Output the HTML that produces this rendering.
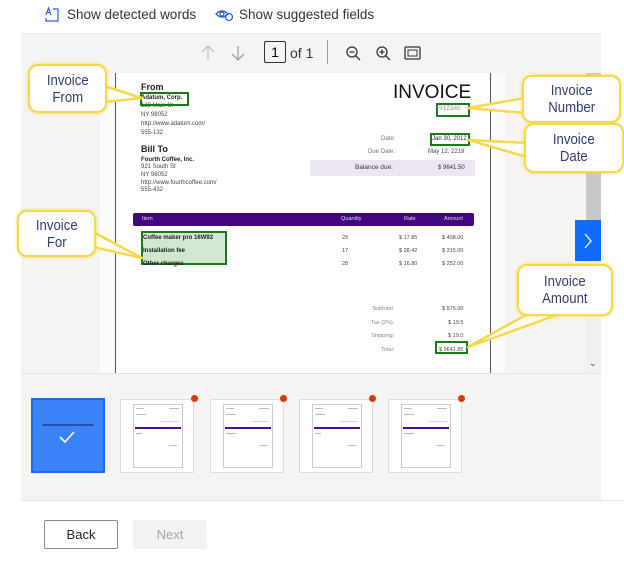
<!DOCTYPE html>
<html><head><meta charset="utf-8"><style>
*{margin:0;padding:0;box-sizing:border-box}
body{width:624px;height:561px;overflow:hidden;background:#fff;font-family:"Liberation Sans",sans-serif;position:relative}
.a{position:absolute}
.t{position:absolute;white-space:nowrap;color:#222}
.co{position:absolute;background:#fff;border:2.5px solid #f5d94a;border-radius:10px;box-shadow:0 0 3px #f0d24a;color:#2e3d6b;font-size:15px;line-height:17px;text-align:center;display:flex;align-items:center;justify-content:center}
.co span{display:inline-block;transform:scaleX(0.88)}
.gb{position:absolute;border:2px solid #1a7a1a}
.th{position:absolute;top:399px;width:74px;height:74px;background:#fff;border:1px solid #ddd}
.th .in{position:absolute;left:12px;top:4px;width:50px;height:64px;border:1px solid #ccc}
.th .bar{position:absolute;left:14px;top:27px;width:46px;height:2px;background:#4b0f88}
.th .l{position:absolute;height:1px;background:#bbb}
.dot{position:absolute;top:395px;width:7px;height:7px;border-radius:50%;background:#d83b01}
</style></head><body>
<!-- toolbar -->
<svg class="a" style="left:44px;top:6px" width="18" height="18" viewBox="0 0 18 18" fill="none" stroke="#2b5fd9" stroke-width="1.2"><path d="M2 9 L4.5 2 L7 9 M3 6.5 H6"/><path d="M9 3 H14 V15 H2 V12"/></svg>
<div class="t" style="left:67px;top:7px;font-size:13.5px;color:#333">Show detected words</div>
<svg class="a" style="left:215px;top:8px" width="20" height="14" viewBox="0 0 20 14" fill="none" stroke="#2b5fd9" stroke-width="1.3"><path d="M1 6 Q7 0 13 6 Q7 12 1 6Z"/><circle cx="7" cy="6" r="2"/><circle cx="14" cy="9" r="3.5"/></svg>
<div class="t" style="left:239px;top:7px;font-size:13.5px;color:#333">Show suggested fields</div>
<!-- viewer -->
<div class="a" style="left:21px;top:33px;width:580px;height:467px;background:#f5f4f2"></div>
<div class="a" style="left:21px;top:33px;width:580px;height:1px;background:#eae8e6"></div>
<div class="a" style="left:100px;top:73px;width:405px;height:300px;background:#fbfbfa"></div>
<div class="a" style="left:115px;top:73px;width:376px;height:300px;background:#fff;border-left:1.5px solid #555;border-right:1.5px solid #555"></div>
<div class="a" style="left:21px;top:373px;width:580px;height:1px;background:#e8e6e4"></div>
<!-- nav -->
<svg class="a" style="left:200px;top:44px" width="46" height="18" viewBox="0 0 46 18" fill="none" stroke-width="1.3"><path d="M8 16V2M2 8L8 2L14 8" stroke="#c0c0c0"/><path d="M38 2V16M32 10L38 16L44 10" stroke="#a0a0a0"/></svg>
<div class="a" style="left:264px;top:41px;width:22px;height:22px;border:1.3px solid #333;border-radius:2px;font-size:14px;text-align:center;line-height:20px">1</div>
<div class="t" style="left:290px;top:45px;font-size:14px;color:#333">of 1</div>
<div class="a" style="left:327px;top:40px;width:1px;height:24px;background:#999"></div>
<svg class="a" style="left:345px;top:45px" width="80" height="18" viewBox="0 0 80 18" fill="none" stroke="#333" stroke-width="1.3"><circle cx="7" cy="7" r="5"/><path d="M4.5 7H9.5M10.5 10.5L15 15"/><circle cx="37" cy="7" r="5"/><path d="M34.5 7H39.5M37 4.5V9.5M40.5 10.5L45 15"/><rect x="60" y="2" width="15" height="12" rx="1"/><path d="M63 5H72V11H63Z" stroke-width="1"/></svg>
<!-- doc -->
<div class="t" style="left:141px;top:82px;font-size:9px;font-weight:bold">From</div>
<div class="t" style="left:141px;top:94px;font-size:6px;font-weight:bold;line-height:9px">Adatum, Corp.</div>
<div class="t" style="left:141px;top:102px;font-size:6px;line-height:9px;color:#444">123 Main St<br>NY 98052<br>http://www.adatum.com/<br>555-132</div>
<div class="gb" style="left:140px;top:92px;width:49px;height:14px"></div>
<div class="t" style="left:393px;top:82px;font-size:19px;color:#111">INVOICE</div>
<div class="t" style="left:439px;top:105px;font-size:6.5px;color:#999">912346</div>
<div class="gb" style="left:436px;top:103px;width:34px;height:14px"></div>
<div class="t" style="left:381px;top:136px;font-size:6px;color:#777">Date:</div>
<div class="t" style="left:432px;top:136px;font-size:6px">Jan 30, 2012</div>
<div class="gb" style="left:430px;top:133px;width:40px;height:13px"></div>
<div class="t" style="left:368px;top:149px;font-size:6px;color:#777">Due Date:</div>
<div class="t" style="left:428px;top:149px;font-size:6px;color:#444">May 12, 2219</div>
<div class="a" style="left:310px;top:160px;width:165px;height:16px;background:#ece6f2"></div>
<div class="t" style="left:355px;top:164px;font-size:6.5px;color:#333">Balance due:</div>
<div class="t" style="left:438px;top:165px;font-size:6px;color:#333">$ 9641.50</div>
<div class="t" style="left:141px;top:144px;font-size:9px;font-weight:bold">Bill To</div>
<div class="t" style="left:141px;top:157px;font-size:6px;font-weight:bold">Fourth Coffee, Inc.</div>
<div class="t" style="left:141px;top:164px;font-size:6px;line-height:7.8px;color:#444">921 South St<br>NY 98052<br>http://www.fourthcoffee.com/<br>555-432</div>
<div class="a" style="left:133px;top:213px;width:341px;height:13px;background:#44067e;border-radius:2px"></div>
<div class="t" style="left:142px;top:216px;font-size:5.5px;color:#ddd">Item</div>
<div class="t" style="left:341px;top:216px;font-size:5.5px;color:#ddd">Quantity</div>
<div class="t" style="left:404px;top:216px;font-size:5.5px;color:#ddd">Rate</div>
<div class="t" style="left:444px;top:216px;font-size:5.5px;color:#ddd">Amount</div>
<div class="a" style="left:141px;top:231px;width:86px;height:34px;background:#d1e7d0;border:2px solid #1a7a1a"></div>
<div class="t" style="left:143px;top:232px;font-size:6px;font-weight:bold;line-height:13px">Coffee maker pro 16W92<br>Installation fee<br>Other charges</div>
<div class="t" style="left:342px;top:232px;font-size:5.5px;line-height:13px;color:#444">29<br>17<br>28</div>
<div class="t" style="left:399px;top:232px;font-size:5.5px;line-height:13px;color:#444">$ 17.85<br>$ 28.42<br>$ 16.80</div>
<div class="t" style="left:442px;top:232px;font-size:5.5px;line-height:13px;color:#444">$ 408.00<br>$ 315.00<br>$ 252.00</div>
<div class="t" style="left:371px;top:303px;font-size:5.5px;line-height:13.5px;color:#888;text-align:right">Subtotal:<br>Tax (2%):<br>Shipping:<br>Total:</div>
<div class="t" style="left:439px;top:303px;font-size:5.5px;line-height:13.5px;color:#444;text-align:right">$ 975.00<br>$ 19.5<br>$ 19.0<br>$ 9641.85</div>
<div class="gb" style="left:435px;top:341px;width:33px;height:13px"></div>
<!-- scrollbar -->
<div class="a" style="left:586px;top:73px;width:15px;height:300px;background:#f0f0f0"></div>
<div class="a" style="left:586px;top:73px;width:15px;height:147px;background:#c8c8c8"></div>
<div class="a" style="left:575px;top:220px;width:26px;height:41px;background:#0f6cff"></div>
<svg class="a" style="left:582px;top:232px" width="12" height="18" viewBox="0 0 12 18" fill="none" stroke="#fff" stroke-width="1.3"><path d="M3 2L9 9L3 16"/></svg>
<div class="t" style="left:589px;top:358px;font-size:9px;color:#444">⌄</div>
<!-- callout pointers -->
<svg class="a" style="left:0;top:0" width="624" height="561" viewBox="0 0 624 561">
<g fill="#fff" stroke="#f5d94a" stroke-width="2.5" stroke-linejoin="round">
<path d="M104 86 L142 98 L104 102Z"/>
<path d="M525 98 L468 108 L525 113Z"/>
<path d="M527 143 L468 140 L527 157Z"/>
<path d="M93 232 L142 258 L93 247Z"/>
<path d="M535 310 L468 347 L565 312Z"/>
</g></svg>
<div class="co" style="left:28px;top:64px;width:79px;height:49px"><span>Invoice<br>From</span></div>
<div class="co" style="left:522px;top:75px;width:99px;height:48px"><span>Invoice<br>Number</span></div>
<div class="co" style="left:524px;top:123px;width:100px;height:50px"><span>Invoice<br>Date</span></div>
<div class="co" style="left:17px;top:210px;width:79px;height:47px"><span>Invoice<br>For</span></div>
<div class="co" style="left:517px;top:264px;width:96px;height:52px"><span>Invoice<br>Amount</span></div>
<!-- thumbnails -->
<div class="a" style="left:31px;top:398px;width:74px;height:75px;background:#3b82f6;border:2px solid #0f6cff"></div>
<div class="a" style="left:42px;top:424px;width:52px;height:2px;background:#2a4fa8"></div>
<svg class="a" style="left:58px;top:430px" width="18" height="14" viewBox="0 0 18 14" fill="none" stroke="#fff" stroke-width="1.6"><path d="M2 7L7 12L16 2"/></svg>
<div class="th" style="left:120px"><div class="in"></div><div class="bar"></div><div class="l" style="left:15px;top:8px;width:8px"></div><div class="l" style="left:48px;top:8px;width:10px"></div><div class="l" style="left:15px;top:14px;width:10px"></div><div class="l" style="left:40px;top:21px;width:18px;background:#d9cfe6"></div><div class="l" style="left:15px;top:33px;width:6px"></div><div class="l" style="left:48px;top:45px;width:8px"></div></div>
<div class="th" style="left:210px"><div class="in"></div><div class="bar"></div><div class="l" style="left:15px;top:8px;width:8px"></div><div class="l" style="left:48px;top:8px;width:10px"></div><div class="l" style="left:15px;top:14px;width:10px"></div><div class="l" style="left:40px;top:21px;width:18px;background:#d9cfe6"></div><div class="l" style="left:15px;top:33px;width:10px"></div><div class="l" style="left:48px;top:45px;width:8px"></div></div>
<div class="th" style="left:299px"><div class="in"></div><div class="bar"></div><div class="l" style="left:15px;top:8px;width:8px"></div><div class="l" style="left:48px;top:8px;width:10px"></div><div class="l" style="left:15px;top:14px;width:10px"></div><div class="l" style="left:40px;top:21px;width:18px;background:#d9cfe6"></div><div class="l" style="left:15px;top:33px;width:6px"></div><div class="l" style="left:48px;top:45px;width:8px"></div></div>
<div class="th" style="left:388px"><div class="in"></div><div class="bar"></div><div class="l" style="left:15px;top:8px;width:8px"></div><div class="l" style="left:48px;top:8px;width:10px"></div><div class="l" style="left:15px;top:14px;width:10px"></div><div class="l" style="left:40px;top:21px;width:18px;background:#d9cfe6"></div><div class="l" style="left:15px;top:33px;width:10px"></div><div class="l" style="left:48px;top:45px;width:8px"></div></div>
<div class="dot" style="left:191px"></div><div class="dot" style="left:280px"></div><div class="dot" style="left:369px"></div><div class="dot" style="left:458px"></div>
<!-- bottom -->
<div class="a" style="left:21px;top:500px;width:603px;height:1px;background:#e6e6e6"></div>
<div class="a" style="left:44px;top:520px;width:74px;height:29px;border:1px solid #8a8a8a;border-radius:2px;font-size:13px;text-align:center;line-height:27px;color:#222">Back</div>
<div class="a" style="left:133px;top:520px;width:74px;height:29px;background:#f3f2f1;border-radius:2px;font-size:13px;text-align:center;line-height:29px;color:#a5a5a5">Next</div>
</body></html>
